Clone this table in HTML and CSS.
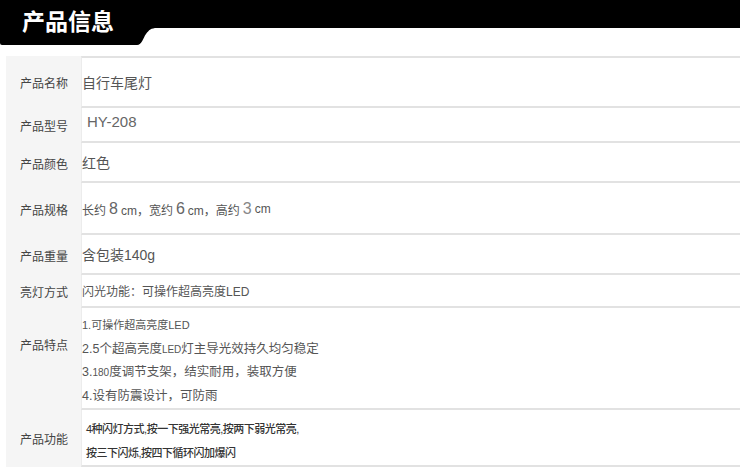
FILE: index.html
```html
<!DOCTYPE html>
<html lang="zh-CN">
<head>
    <meta charset="UTF-8">
    <meta name="viewport" content="width=device-width, initial-scale=1.0">
    <title>产品信息</title>
    <link rel="stylesheet" href="styles.css">
</head>
<body>
    <div class="header">
        <div class="tab">产品信息</div>
        <svg class="curve" width="22" height="45" viewBox="0 0 22 45">
            <path d="M0 0 H22 V28 H20 C14 28 12 30 9 34 C6 38 5 45 0 45 Z" fill="#000"/>
        </svg>
        <div class="bar"></div>
    </div>

    <div class="spec">
        <div class="label">产品名称</div>
        <div class="value name">自行车尾灯</div>

        <div class="label">产品型号</div>
        <div class="value model">HY-208</div>

        <div class="label">产品颜色</div>
        <div class="value">红色</div>

        <div class="label">产品规格</div>
        <div class="value size">长约 <span class="num">8</span> cm，宽约 <span class="num">6</span> cm，高约 <span class="num thin">3</span> cm</div>

        <div class="label">产品重量</div>
        <div class="value">含包装140g</div>

        <div class="label">亮灯方式</div>
        <div class="value small">闪光功能：可操作超高亮度LED</div>

        <div class="label top">产品特点</div>
        <div class="value list">
            <p class="small">1.可操作超高亮度LED</p>
            <p>2.5个超高亮度<span class="tiny">LED</span>灯主导光效持久均匀稳定</p>
            <p>3.<span class="tiny">180</span>度调节支架，结实耐用，装取方便</p>
            <p>4.设有防震设计，可防雨</p>
        </div>

        <div class="label">产品功能</div>
        <div class="value list func">
            <p>4种闪灯方式,按一下强光常亮,按两下弱光常亮,</p>
            <p>按三下闪烁,按四下循环闪加爆闪</p>
        </div>
    </div>
</body>
</html>
```

FILE: styles.css
```css
body {
    margin: 0;
    background: #fff;
    font-family: "Liberation Sans", "Noto Sans CJK SC", sans-serif;
    color: #444;
}

/* black title bar with the curved tab */
.header {
    display: flex;
    height: 45px;
}

.tab {
    width: 137px;
    height: 45px;
    background: #000;
    color: #fff;
    font-family: "Noto Sans CJK SC", sans-serif;
    font-size: 23px;
    font-weight: bold;
    line-height: 40px;
    padding-left: 22px;
    box-sizing: border-box;
    border-bottom-left-radius: 2px;
}

.curve {
    display: block;
    flex: none;
}

.bar {
    flex: 1;
    height: 28px;
    background: #000;
}

/* spec table */
.spec {
    display: grid;
    grid-template-columns: 75px 1fr;
    grid-template-rows: 52px 35px 40px 52px 40px 33px 102px 57px;
    margin: 11px 0 0 6px;
}

.label {
    background: #f5f5f5;
    font-family: "Noto Sans CJK SC", sans-serif;
    font-size: 12px;
    color: #444;
    display: flex;
    align-items: center;
    padding-left: 14px;
}

.label.top {
    align-items: flex-start;
    padding-top: 28px;
}

.value {
    border-left: 1px solid #ececec;
    border-bottom: 2px solid #e2e2e2;
    display: flex;
    align-items: center;
    font-size: 14px;
    color: #555;
    box-sizing: border-box;
}

.value:nth-child(2) {
    border-top: 2px solid #e2e2e2;
}

.value.model {
    padding: 0 0 6px 5px;
    font-size: 15px;
    color: #666;
}

.value.size {
    font-size: 12px;
    padding-top: 2px;
}

.num {
    font-size: 16px;
    font-weight: 300;
    color: #666;
    margin: 0 3px;
}

.num.thin {
    color: #888;
}

.small {
    font-size: 12px;
}

.tiny {
    font-size: 10px;
}

.value.list {
    display: block;
    padding-top: 6px;
}

.list p {
    margin: 0;
    height: 23.5px;
    line-height: 23.5px;
    font-size: 12.5px;
}

.list p.small {
    font-size: 11px;
}

.value.func {
    padding: 7px 0 0 4px;
}

.func p {
    height: 24px;
    line-height: 24px;
    font-size: 11px;
    font-weight: 500;
    color: #333;
    letter-spacing: -0.5px;
}
```
